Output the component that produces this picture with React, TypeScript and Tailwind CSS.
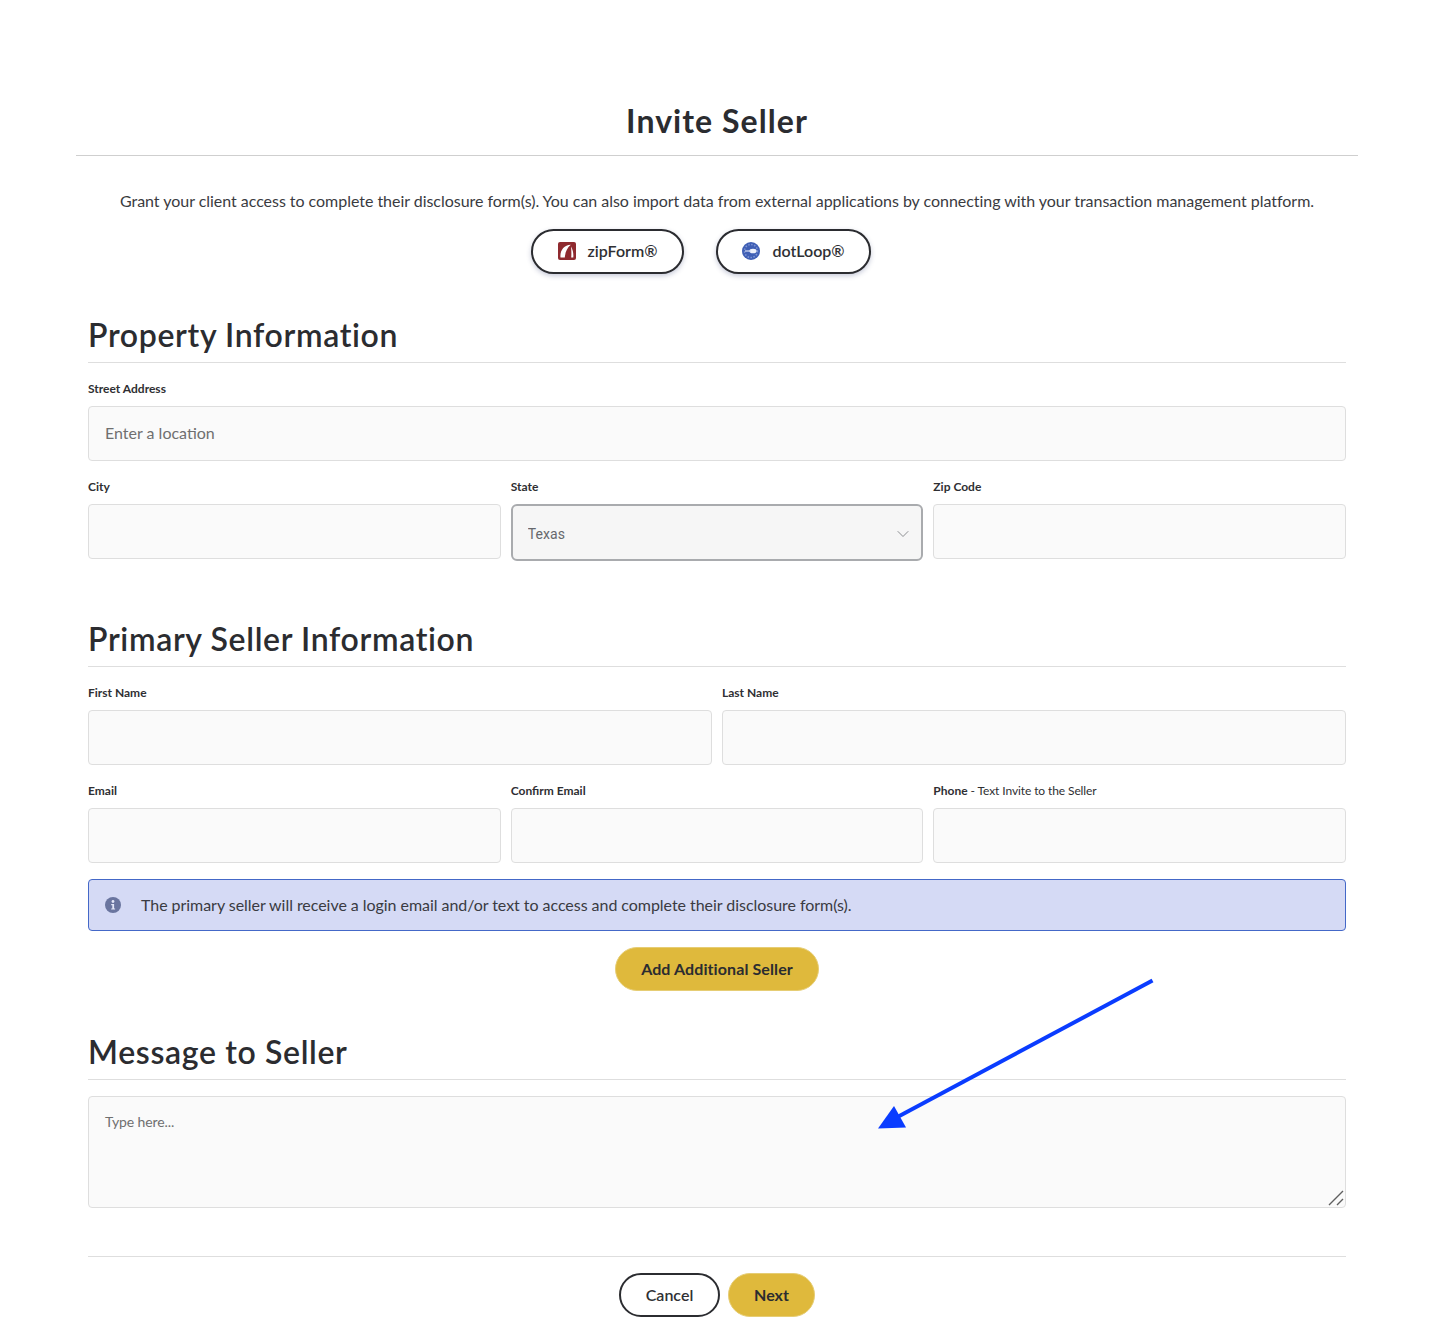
import { ChevronDown } from "lucide-react";

const fieldClass =
  "block w-full h-[55px] rounded-[4px] border border-[#dedede] bg-[#fafafa] px-4 pb-[2px] text-[16px] tracking-normal text-[#333] placeholder:text-[#6f6f6f] outline-none";

const Label = ({ children }: { children: React.ReactNode }) => (
  <label className="block h-[18px] mb-[9px] pt-[1px] text-[12px] leading-[18px] font-bold tracking-normal text-[#2f2f33]">{children}</label>
);

const Field = ({ label, placeholder }: { label: React.ReactNode; placeholder?: string }) => (
  <div className="flex-1 min-w-0">
    <Label>{label}</Label>
    <input className={fieldClass} placeholder={placeholder} />
  </div>
);

const SectionHeading = ({ children, className }: { children: React.ReactNode; className?: string }) => (
  <h2
    className={`border-b border-[#dedede] text-[32px] leading-[38px] font-semibold text-[#2b2c30] tracking-[0.65px] ${className ?? ""}`}
  >
    {children}
  </h2>
);

const ZipFormLogo = () => (
  <svg width="18" height="18" viewBox="0 0 18 18" className="shrink-0">
    <rect width="18" height="18" rx="2" fill="#8f2a2f" />
    <path d="M2.5 15.5C1.8 8.5 6 3 12.8 2.8C9 6 7.3 10 6.8 15.5Z" fill="#fff" />
    <path d="M13 4.5C15 8 15.6 11.5 15.3 15.5H13.2C13.5 11.5 13.4 8 13 4.5Z" fill="#fff" />
  </svg>
);

const DotLoopLogo = () => (
  <svg width="18" height="18" viewBox="0 0 18 18" className="shrink-0">
    <circle cx="9" cy="9" r="9" fill="#3f5fb5" />
    <circle cx="9" cy="9" r="6.5" fill="none" stroke="#7f95d4" strokeWidth="1.5" strokeDasharray="1.5 1.5" />
    <ellipse cx="11" cy="9" rx="3.6" ry="2.3" fill="#eef1fb" />
    <rect x="3" y="8.4" width="6" height="1.2" fill="#d5dcf3" />
  </svg>
);

const IntegrationButton = ({ logo, name, className }: { logo: React.ReactNode; name: string; className: string }) => (
  <button
    className={`flex h-[45px] items-center justify-center gap-[12px] rounded-full border-2 border-[#2b2c30] bg-white pb-[2px] text-[16px] font-semibold tracking-normal text-[#2f3034] shadow-[0_2px_5px_rgba(70,80,130,0.3)] ${className}`}
  >
    {logo}
    {name}
  </button>
);

const App = () => {
  return (
    <main
      className="relative min-h-[1344px] bg-white pl-[76px] pr-[72px] pt-[96px] text-[#2f3034]"
      style={{ fontFamily: "Lato, 'Open Sans', sans-serif" }}
    >
      <h1 className="h-[60px] border-b border-[#cfcfcf] text-center text-[32px] leading-[50px] font-bold text-[#2b2c30] tracking-[1.05px]">
        Invite Seller
      </h1>

      <p className="mt-[34px] text-center text-[16px] leading-[22px] tracking-[-0.035px] text-[#3a3b3f]">
        Grant your client access to complete their disclosure form(s). You can also import data from external
        applications by connecting with your transaction management platform.
      </p>

      <div className="mt-[17px] flex justify-center gap-[32px] pr-[32px]">
        <IntegrationButton logo={<ZipFormLogo />} name="zipForm®" className="w-[153px]" />
        <IntegrationButton logo={<DotLoopLogo />} name="dotLoop®" className="w-[155px]" />
      </div>

      <div className="px-[12px]">
        <SectionHeading className="mt-[42px] h-[47px]">Property Information</SectionHeading>

        <div className="mt-[16px]">
          <Field label="Street Address" placeholder="Enter a location" />
        </div>

        <div className="mt-[16px] flex gap-[10px]">
          <Field label="City" />
          <div className="flex-1 min-w-0">
            <Label>State</Label>
            <div className="relative">
              <select
                className="block h-[57px] w-full appearance-none rounded-[6px] border-2 border-[#a9abae] bg-[#f6f6f6] pl-[15px] pr-8 pt-[4px] text-[14px] tracking-[0.1px] text-[#66686c] outline-none"
                style={{ fontFamily: "Roboto, sans-serif" }}
              >
                <option>Texas</option>
              </select>
              <ChevronDown className="absolute right-[10px] top-[20px] h-[20px] w-[20px] text-[#77797d]" strokeWidth={1} />
            </div>
          </div>
          <Field label="Zip Code" />
        </div>

        <SectionHeading className="mt-[59px] h-[47px]">Primary Seller Information</SectionHeading>

        <div className="mt-[16px] flex gap-[10px]">
          <Field label="First Name" />
          <Field label="Last Name" />
        </div>

        <div className="mt-[16px] flex gap-[10px]">
          <Field label="Email" />
          <Field label="Confirm Email" />
          <Field
            label={
              <>
                Phone<span className="font-normal tracking-[-0.1px]"> - Text Invite to the Seller</span>
              </>
            }
          />
        </div>

        <div className="mt-[16px] flex h-[52px] items-center gap-[20px] rounded-[4px] border border-[#4468c8] bg-[#d5daf5] px-[16px] text-[16px] tracking-[-0.045px] text-[#3a3b42]">
          <svg width="16" height="16" viewBox="0 0 16 16" className="shrink-0">
            <circle cx="8" cy="8" r="8" fill="#6a759f" />
            <circle cx="8" cy="4.5" r="1.4" fill="#e3e6f7" />
            <path d="M6.2 7h2.9v4.4h1v1.2H6.2v-1.2h1.1V8.2H6.2Z" fill="#e3e6f7" />
          </svg>
          The primary seller will receive a login email and/or text to access and complete their disclosure form(s).
        </div>

        <div className="mt-[16px] flex justify-center">
          <button className="h-[44px] w-[204px] rounded-full border border-[#e6cd74] bg-[#dfb93c] text-[16px] font-bold tracking-[0.1px] text-[#2b2c30]">
            Add Additional Seller
          </button>
        </div>

        <SectionHeading className="mt-[38px] h-[51px] pt-[4px]">Message to Seller</SectionHeading>

        <div className="relative mt-[16px]">
          <textarea
            className="block h-[112px] w-full resize-none rounded-[4px] border border-[#dedede] bg-[#fafafa] px-4 py-[15px] text-[14px] leading-[20px] tracking-[-0.1px] outline-none placeholder:text-[#6f6f6f]"
            placeholder="Type here..."
          />
          <svg width="16" height="16" viewBox="0 0 16 16" className="absolute bottom-[2px] right-[2px]">
            <path d="M1 15L15 1M9 15L15 9" stroke="#5f5f5f" strokeWidth="1.4" fill="none" />
          </svg>
        </div>

        <div className="mt-[48px] flex justify-center gap-[8px] border-t border-[#dedede] pt-[16px]">
          <button className="h-[44px] w-[101px] rounded-full border-2 border-[#2b2c30] bg-white text-[16px] font-semibold text-[#2f3034]">
            Cancel
          </button>
          <button className="h-[44px] w-[87px] rounded-full border border-[#e6cd74] bg-[#dfb93c] text-[16px] font-bold text-[#2b2c30]">
            Next
          </button>
        </div>
      </div>

      {/* annotation arrow drawn over the form */}
      <svg width="290" height="160" viewBox="0 0 290 160" className="absolute left-[870px] top-[975px]">
        <path d="M282.5 5.5L20 146" stroke="#0a3cff" strokeWidth="4" fill="none" />
        <path d="M8 153.5L24 131L36 152.5Z" fill="#0a3cff" />
      </svg>
    </main>
  );
};

export default App;
